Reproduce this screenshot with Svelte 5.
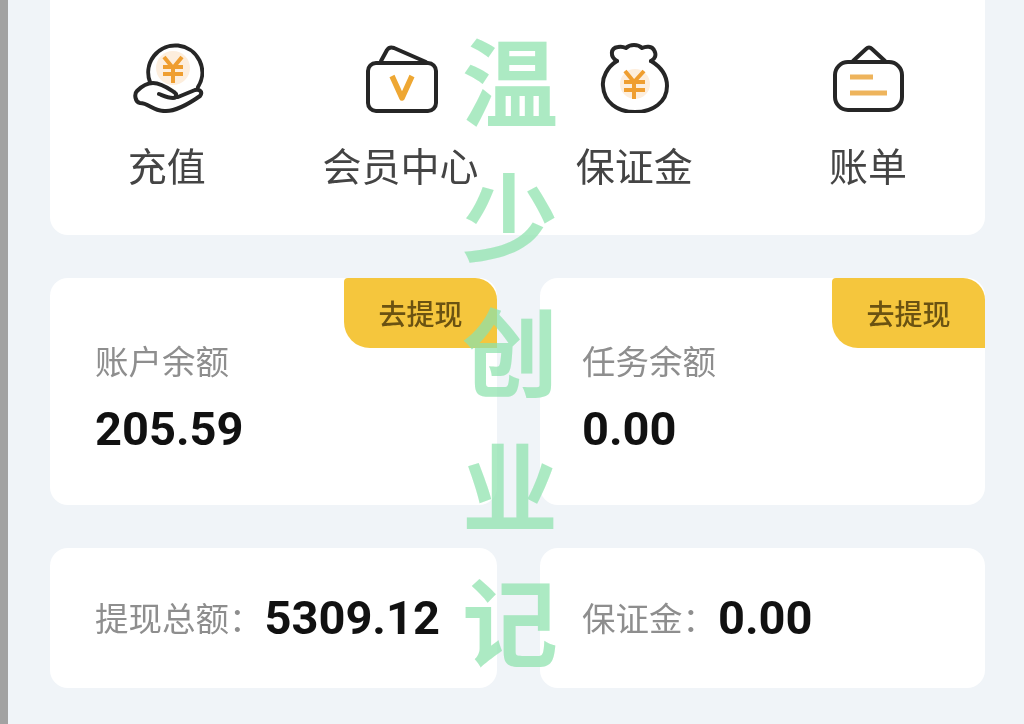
<script lang="ts">
    const balances = [
        {label: '账户余额', value: '205.59'},
        {label: '任务余额', value: '0.00'}
    ];
    const totals = [
        {label: '提现总额：', value: '5309.12'},
        {label: '保证金：', value: '0.00'}
    ];
    const watermark = ['温', '少', '创', '业', '记'];
</script>

<div class="page">
    <div class="edge"></div>
    <main class="content">
        <section class="card menu">
            <div class="menu-item">
                <svg class="icon" viewBox="130 43 74 70" aria-hidden="true">
                    <circle class="glow" cx="173" cy="68" r="17"></circle>
                    <path class="line" d="M150 82A27 27 0 1 1 198 87"></path>
                    <path class="line" d="M159 94C164 96 168 98 173 98C177 98 177 94 174 92C168 88 161 83 153 83C147 83 141 87 137 91C134 94 135 102 140 103C149 103 154 112 166 111C176 111 190 103 200 96C203 92 200 89 195 90L178 97"></path>
                    <path class="accent" d="M164 57L173 68L182 57M163 67H183M163 74H183M173 68V83"></path>
                </svg>
                <span>充值</span>
            </div>
            <div class="menu-item">
                <svg class="icon" viewBox="363 43 74 70" aria-hidden="true">
                    <rect class="line" x="367" y="63" width="68" height="48" rx="8"></rect>
                    <path class="line" d="M380 61L386 50C388 47 390 47 393 48L425 62"></path>
                    <path class="accent wide" d="M391 76L401 98L411 76"></path>
                </svg>
                <span>会员中心</span>
            </div>
            <div class="menu-item">
                <svg class="icon" viewBox="597 43 74 70" aria-hidden="true">
                    <circle class="glow" cx="635" cy="84" r="15"></circle>
                    <path class="line" d="M617 61C607 67 602 78 603 86C604 102 617 112 635 112C653 112 667 102 667 86C667 76 661 67 651 61"></path>
                    <path class="line" d="M617 61C610 57 610 48 618 47C622 46 624 47 626 48C630 44 638 44 642 48C646 46 652 46 654 50C657 55 655 59 651 61"></path>
                    <path class="accent" d="M625 71L634 82L644 71M624 82H645M624 90H645M634 82V99"></path>
                </svg>
                <span>保证金</span>
            </div>
            <div class="menu-item">
                <svg class="icon" viewBox="831 43 74 70" aria-hidden="true">
                    <rect class="line" x="835" y="62" width="67" height="48" rx="13"></rect>
                    <path class="line" d="M853 61L866 49C868 47 870 47 872 49L885 61"></path>
                    <path class="accent soft" d="M850 77H873M850 93H887"></path>
                </svg>
                <span>账单</span>
            </div>
        </section>

        <section class="pair">
            {#each balances as item}
                <div class="card balance">
                    <div class="tab">去提现</div>
                    <div class="label">{item.label}</div>
                    <div class="value">{item.value}</div>
                </div>
            {/each}
        </section>

        <section class="pair">
            {#each totals as item}
                <div class="card total">
                    <span class="label">{item.label}</span>
                    <span class="value">{item.value}</span>
                </div>
            {/each}
        </section>
    </main>

    <div class="watermark">
        {#each watermark as char}
            <span>{char}</span>
        {/each}
    </div>
</div>

<style>
    :global(body) {
        background: #f0f4f8;
    }

    .page {
        position: relative;
        display: flex;
        width: 1024px;
        height: 724px;
        overflow: hidden;
        background: #f0f4f8;
        font-family: "Noto Sans CJK SC", "Noto Sans", sans-serif;
        filter: blur(0.7px);
    }

    .edge {
        flex: 0 0 8px;
        background: #a2a2a2;
    }

    .content {
        flex: 1;
        display: flex;
        flex-direction: column;
        gap: 43px;
        padding: 0 39px 0 42px;
    }

    .card {
        background: #fff;
        border-radius: 18px;
    }

    .menu {
        display: grid;
        grid-template-columns: repeat(4, 1fr);
        height: 235px;
        box-sizing: border-box;
        padding-top: 43px;
        border-radius: 0 0 18px 18px;
    }

    .menu-item {
        display: flex;
        flex-direction: column;
        align-items: center;
        gap: 26px;
    }

    .menu-item span {
        font-size: 39px;
        line-height: 50px;
        color: #444;
    }

    .icon {
        display: block;
        width: 74px;
        height: 70px;
    }

    .line {
        fill: none;
        stroke: #262626;
        stroke-width: 4;
        stroke-linecap: round;
        stroke-linejoin: round;
    }

    .accent {
        fill: none;
        stroke: #ef9e30;
        stroke-width: 4;
        stroke-linejoin: round;
    }

    .wide {
        stroke-width: 5.5;
        stroke: #eea733;
    }

    .soft {
        stroke-width: 5;
        stroke: #eeb45c;
    }

    .glow {
        fill: #fdeedd;
    }

    .pair {
        display: grid;
        grid-template-columns: 447fr 445fr;
        gap: 43px;
    }

    .balance {
        position: relative;
        height: 227px;
        box-sizing: border-box;
        padding: 60px 0 0 45px;
    }

    .card:nth-child(2) {
        padding-left: 42px;
    }

    .tab {
        position: absolute;
        top: 0;
        right: 0;
        width: 153px;
        height: 70px;
        display: flex;
        align-items: center;
        justify-content: center;
        background: #f5c63d;
        border-radius: 4px 22px 0 26px;
        font-size: 28px;
        font-weight: 500;
        color: #6a5212;
    }

    .label {
        font-size: 33.5px;
        line-height: 44px;
        color: #8e8e8e;
    }

    .value {
        font-family: Roboto, "Noto Sans", sans-serif;
        font-size: 47px;
        font-weight: 700;
        line-height: 56px;
        color: #111;
    }

    .balance .value {
        margin-top: 19px;
    }

    .total {
        display: flex;
        align-items: center;
        gap: 2px;
        height: 140px;
        padding-left: 45px;
    }

    .total .label {
        margin-bottom: 2px;
    }

    .watermark {
        position: absolute;
        top: 10px;
        left: 462px;
        width: 96px;
        display: flex;
        flex-direction: column;
        align-items: center;
        font-size: 96px;
        font-weight: 700;
        line-height: 135px;
        color: rgba(140, 226, 172, 0.72);
        pointer-events: none;
    }
</style>
